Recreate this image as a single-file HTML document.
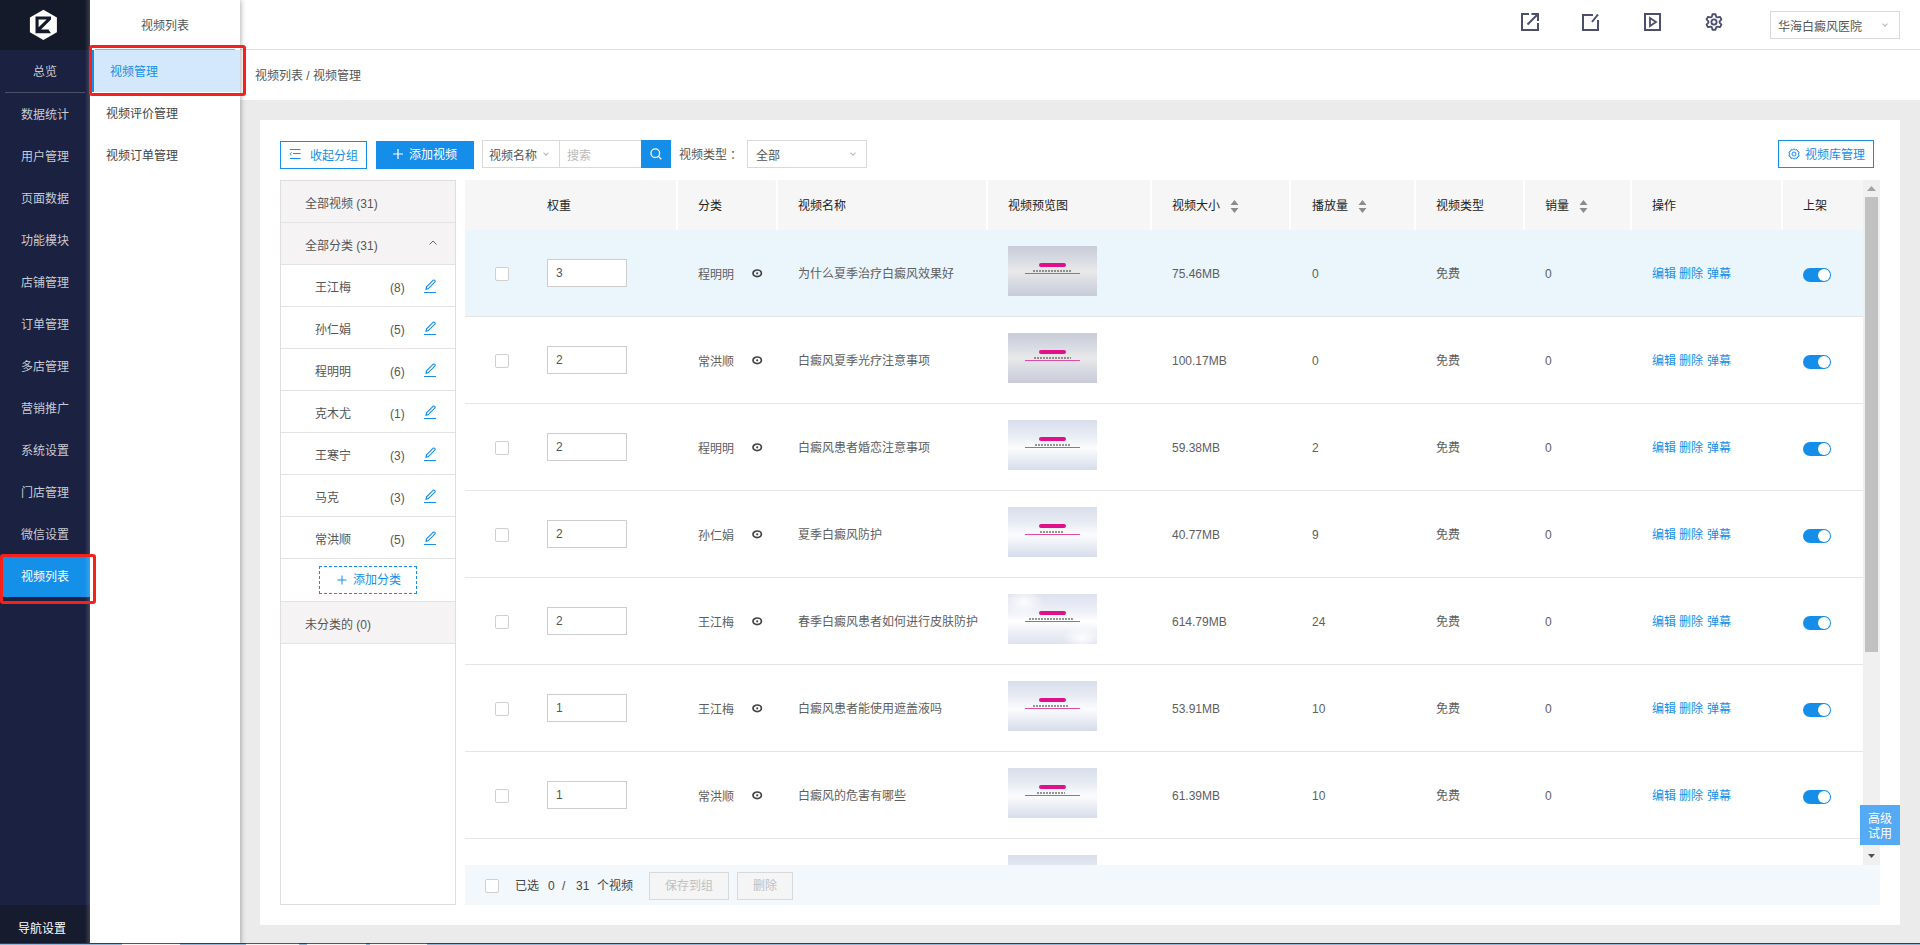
<!DOCTYPE html>
<html lang="zh-CN">
<head>
<meta charset="utf-8">
<style>
*{margin:0;padding:0;box-sizing:border-box}
html,body{width:1920px;height:945px;overflow:hidden;background:#ebebeb;font-family:"Liberation Sans",sans-serif;font-size:12px;color:#333}
.abs{position:absolute}
#nav{position:absolute;left:0;top:0;width:90px;height:945px;background:#1b2140;z-index:3}
#logo{position:absolute;left:0;top:0;width:90px;height:50px;background:#151a2b}
.ni{position:absolute;left:0;width:90px;text-align:center;color:#c9cbd3;font-size:12px;line-height:18px}
#navbot{position:absolute;left:0;top:905px;width:90px;height:40px;background:#161b2d}
#sub{position:absolute;left:90px;top:0;width:150px;height:945px;background:#fff;box-shadow:1px 0 5px rgba(0,0,0,.3);z-index:2}
.si{position:absolute;left:16px;color:#444;line-height:18px}
#hdr{position:absolute;left:240px;top:0;width:1680px;height:50px;background:#fff;border-bottom:1px solid #dcdcdc}
#bc{position:absolute;left:240px;top:50px;width:1680px;height:50px;background:#fff}
#card{position:absolute;left:260px;top:120px;width:1640px;height:805px;background:#fff}
.btn{position:absolute;height:28px;line-height:26px;font-size:12px}
.dis{border:1px solid #d9d9d9;background:#f5f5f5;color:#c0c0c0;text-align:center}
.red{position:absolute;border:3px solid #f5211c;border-radius:3px;z-index:5}
.sel{position:absolute;border:1px solid #d9d9d9;background:#fff}
.sel span{position:absolute;top:6px;line-height:18px;color:#555}
.chev{position:absolute;width:4px;height:4px;border-right:1px solid #b5b5b5;border-bottom:1px solid #b5b5b5;transform:rotate(45deg)}
#grp{position:absolute;left:280px;top:180px;width:176px;height:725px;border:1px solid #dedede;background:#fff}
.gr{position:absolute;left:0;width:174px;height:42px;border-bottom:1px solid #e3e3e3}
.gt{position:absolute;top:14px;line-height:18px;color:#555}
.ht{position:absolute;top:197px;line-height:18px;color:#222}
.sep{position:absolute;top:180px;width:2px;height:50px;background:#fff}
.row{position:absolute;width:1398px;height:87px;border-bottom:1px solid #e6e6e6}
.cell{position:absolute;line-height:18px;color:#5e5e5e}
.cb{position:absolute;width:14px;height:14px;border:1px solid #cfcfcf;border-radius:2px;background:#fff}
.inp{position:absolute;width:80px;height:28px;border:1px solid #cdcdcd;background:#fff;padding-left:8px;line-height:26px;color:#555}
.thumb{position:absolute;width:89px;height:50px}
.ta{background:linear-gradient(#c8ccd9 0%,#d8dbe2 28%,#e9e9e9 50%,#d8dbe2 72%,#c8ccd9 100%)}
.tb{background:linear-gradient(#d8deeb 0%,#e7ebf3 30%,#fbfcfd 56%,#e7ebf3 80%,#d6dcea 100%)}
.tc{background:radial-gradient(ellipse 20px 14px at 16px 8px,rgba(255,255,255,.9),rgba(255,255,255,0)),radial-gradient(ellipse 20px 12px at 74px 44px,rgba(255,255,255,.9),rgba(255,255,255,0)),linear-gradient(#dde2f0 0%,#eef0f7 35%,#ffffff 55%,#eef0f7 75%,#dfe3f1 100%)}
.thumb .tb1{position:absolute;left:31px;top:17px;width:27px;height:4px;border-radius:2px;background:#e0108a}
.thumb .tb2{position:absolute;left:25px;top:24px;width:38px;height:2px;background:repeating-linear-gradient(to right,#3d4a35 0,#3d4a35 2px,transparent 2px,transparent 3px);opacity:.55}
.thumb .tb3{position:absolute;left:17px;top:27px;width:55px;height:1.3px;background:#e04aa5}
.tg{position:absolute;width:28px;height:14px;border-radius:7px;background:#158ee9}
.tg:after{content:"";position:absolute;right:1px;top:1px;width:12px;height:12px;border-radius:6px;background:#fff}
.ops{position:absolute;color:#158ee9;line-height:18px}

</style>
</head>
<body>
<div id="nav"><div id="logo"><svg width="90" height="50" style="position:absolute;left:0;top:0"><polygon points="43.4,9.8 56.9,17.6 56.9,32.3 43.4,40 29.9,32.3 29.9,17.6" fill="#fff"/><path d="M35.5 16.6 H51 V19.6 L41 29.6 H48.4 L51 33.3 H35.5 Z M38.6 19.4 V27.3 L46.6 19.4 Z" fill="#151a2b" fill-rule="evenodd"/></svg></div>
<div class="ni" style="top:63px">总览</div>
<div class="abs" style="left:5px;top:92px;width:80px;height:1px;background:#4a4f6a"></div>
<div class="ni" style="top:106px">数据统计</div>
<div class="ni" style="top:148px">用户管理</div>
<div class="ni" style="top:190px">页面数据</div>
<div class="ni" style="top:232px">功能模块</div>
<div class="ni" style="top:274px">店铺管理</div>
<div class="ni" style="top:316px">订单管理</div>
<div class="ni" style="top:358px">多店管理</div>
<div class="ni" style="top:400px">营销推广</div>
<div class="ni" style="top:442px">系统设置</div>
<div class="ni" style="top:484px">门店管理</div>
<div class="ni" style="top:526px">微信设置</div>
<div class="abs" style="left:0;top:557px;width:90px;height:40px;background:#1590e9"></div>
<div class="ni" style="top:568px;color:#fff">视频列表</div>
<div id="navbot"></div><div class="ni" style="top:920px;left:-3px;color:#fff">导航设置</div>
<div class="abs" style="left:85px;top:0;width:5px;height:945px;background:linear-gradient(to right,rgba(255,255,255,0),rgba(255,255,255,.16))"></div></div>
<div id="sub"><div class="abs" style="left:0;top:17px;width:150px;text-align:center;color:#555;line-height:18px">视频列表</div><div class="abs" style="left:2px;top:50px;width:148px;height:42px;background:#d4e8fb;border-left:2px solid #158ee9"></div><div class="abs" style="left:5px;top:49px;width:140px;height:1px;background:#a3a9c6"></div><div class="si" style="left:20px;top:63px;color:#158ee9">视频管理</div><div class="si" style="top:105px">视频评价管理</div><div class="si" style="top:147px">视频订单管理</div></div>
<div id="hdr">
<svg class="abs" style="left:1281px;top:13px" width="18" height="18" viewBox="0 0 18 18" fill="none" stroke="#4b4f6d" stroke-width="2"><path d="M8 1 H1 V17 H17 V10"/><path d="M10.5 1 H17 V8"/><path d="M6.5 11.5 L16 2"/></svg>
<svg class="abs" style="left:1342px;top:14px" width="18" height="18" viewBox="0 0 18 18" fill="none" stroke="#4b4f6d" stroke-width="2"><path d="M11 1 H1 V16 H16 V6"/><path d="M10 8 L16 0.5"/></svg>
<svg class="abs" style="left:1404px;top:13px" width="18" height="18" viewBox="0 0 18 18" fill="none" stroke="#4b4f6d" stroke-width="2"><rect x="1" y="1" width="15" height="16"/><path d="M6 5 L12 9 L6 13 Z" stroke-width="1.8"/></svg>
<svg class="abs" style="left:1464.5px;top:12.8px" width="18" height="18" viewBox="0 0 18 18" fill="none" stroke="#4b4f6d" stroke-width="1.8"><path d="M11.28 3.88 L10.51 1.25 L7.49 1.25 L6.72 3.88 L5.71 4.47 L3.04 3.82 L1.53 6.43 L3.43 8.41 L3.43 9.59 L1.53 11.57 L3.04 14.18 L5.71 13.53 L6.72 14.12 L7.49 16.75 L10.51 16.75 L11.28 14.12 L12.29 13.53 L14.96 14.18 L16.47 11.57 L14.57 9.59 L14.57 8.41 L16.47 6.43 L14.96 3.82 L12.29 4.47 Z" stroke-linejoin="round"/><circle cx="9" cy="9" r="2.6"/></svg>
<div class="sel" style="left:1530px;top:11px;width:130px;height:28px"><span style="left:7px">华海白癜风医院</span><i class="chev" style="left:112px;top:10px"></i></div>
</div>
<div id="bc"><div class="abs" style="left:15px;top:17px;color:#555;line-height:18px">视频列表 / 视频管理</div></div>
<div id="card"></div>
<div class="btn" style="left:280px;top:141px;width:87px;border:1px solid #158ee9;color:#158ee9;background:#fff"><svg class="abs" style="left:8px;top:6px" width="12" height="12" viewBox="0 0 12 12" fill="none" stroke="#158ee9" stroke-width="1"><path d="M1 1.5H11.5M4 5.5H11.5M1 10.5H11.5M2.6 4.3L1.2 5.8L2.6 7.3"/></svg><span style="position:absolute;left:29px;top:1px">收起分组</span></div>
<div class="btn" style="left:376px;top:141px;width:98px;background:#158ee9;color:#fff"><svg class="abs" style="left:17px;top:8px" width="10" height="10" viewBox="0 0 10 10" stroke="#fff" stroke-width="1.2"><path d="M5 0V10M0 5H10"/></svg><span style="position:absolute;left:33px;top:1px">添加视频</span></div>
<div class="sel" style="left:482px;top:140px;width:78px;height:28px"><span style="left:6px">视频名称</span><i class="chev" style="left:61px;top:10px"></i></div>
<div class="sel" style="left:559px;top:140px;width:83px;height:28px"><span style="left:7px;color:#bbb">搜索</span></div>
<div class="abs" style="left:641px;top:140px;width:30px;height:28px;background:#158ee9"><svg class="abs" style="left:8px;top:7px" width="14" height="14" viewBox="0 0 14 14" fill="none" stroke="#fff" stroke-width="1.3"><circle cx="6.3" cy="6.2" r="4.3"/><path d="M9.3 9.3 L12.3 12.3"/></svg></div>
<div class="abs" style="left:679px;top:146px;color:#555;line-height:18px">视频类型 ：</div>
<div class="sel" style="left:747px;top:140px;width:120px;height:28px"><span style="left:8px">全部</span><i class="chev" style="left:103px;top:10px"></i></div>
<div class="btn" style="left:1778px;top:140px;width:96px;border:1px solid #158ee9;color:#158ee9;background:#fff"><svg class="abs" style="left:9px;top:7px" width="12" height="12" viewBox="0 0 12 12" fill="none" stroke="#158ee9" stroke-width="1"><path d="M6 0.8 L7.3 1.9 L9 1.6 L9.5 3.3 L11.1 4 L10.5 6 L11.1 8 L9.5 8.7 L9 10.4 L7.3 10.1 L6 11.2 L4.7 10.1 L3 10.4 L2.5 8.7 L0.9 8 L1.5 6 L0.9 4 L2.5 3.3 L3 1.6 L4.7 1.9 Z"/><circle cx="6" cy="6" r="2"/></svg><span style="position:absolute;left:26px;top:1px">视频库管理</span></div>
<div id="grp">
<div class="gr" style="top:0;background:#f5f3f4"><span class="gt" style="left:24px">全部视频 (31)</span></div>
<div class="gr" style="top:42px;background:#f5f3f4"><span class="gt" style="left:24px">全部分类 (31)</span><svg class="abs" style="left:148px;top:17px" width="8" height="5" viewBox="0 0 8 5" fill="none" stroke="#666" stroke-width="1"><path d="M0.5 4.5 L4 1 L7.5 4.5"/></svg></div>
<div class="gr" style="top:84px"><span class="gt" style="left:34px">王江梅</span><span class="gt" style="left:109px">(8)</span><svg class="abs" style="left:142px;top:14px" width="14" height="14" viewBox="0 0 14 14" fill="none" stroke="#158ee9" stroke-width="1.1"><path d="M3 10.5 L3.5 7.8 L10 1.3 Q11 0.6 11.8 1.4 Q12.6 2.3 11.8 3.1 L5.3 9.6 Z"/><path d="M1 13.5 H13" stroke-width="1"/></svg></div>
<div class="gr" style="top:126px"><span class="gt" style="left:34px">孙仁娟</span><span class="gt" style="left:109px">(5)</span><svg class="abs" style="left:142px;top:14px" width="14" height="14" viewBox="0 0 14 14" fill="none" stroke="#158ee9" stroke-width="1.1"><path d="M3 10.5 L3.5 7.8 L10 1.3 Q11 0.6 11.8 1.4 Q12.6 2.3 11.8 3.1 L5.3 9.6 Z"/><path d="M1 13.5 H13" stroke-width="1"/></svg></div>
<div class="gr" style="top:168px"><span class="gt" style="left:34px">程明明</span><span class="gt" style="left:109px">(6)</span><svg class="abs" style="left:142px;top:14px" width="14" height="14" viewBox="0 0 14 14" fill="none" stroke="#158ee9" stroke-width="1.1"><path d="M3 10.5 L3.5 7.8 L10 1.3 Q11 0.6 11.8 1.4 Q12.6 2.3 11.8 3.1 L5.3 9.6 Z"/><path d="M1 13.5 H13" stroke-width="1"/></svg></div>
<div class="gr" style="top:210px"><span class="gt" style="left:34px">克木尤</span><span class="gt" style="left:109px">(1)</span><svg class="abs" style="left:142px;top:14px" width="14" height="14" viewBox="0 0 14 14" fill="none" stroke="#158ee9" stroke-width="1.1"><path d="M3 10.5 L3.5 7.8 L10 1.3 Q11 0.6 11.8 1.4 Q12.6 2.3 11.8 3.1 L5.3 9.6 Z"/><path d="M1 13.5 H13" stroke-width="1"/></svg></div>
<div class="gr" style="top:252px"><span class="gt" style="left:34px">王寒宁</span><span class="gt" style="left:109px">(3)</span><svg class="abs" style="left:142px;top:14px" width="14" height="14" viewBox="0 0 14 14" fill="none" stroke="#158ee9" stroke-width="1.1"><path d="M3 10.5 L3.5 7.8 L10 1.3 Q11 0.6 11.8 1.4 Q12.6 2.3 11.8 3.1 L5.3 9.6 Z"/><path d="M1 13.5 H13" stroke-width="1"/></svg></div>
<div class="gr" style="top:294px"><span class="gt" style="left:34px">马克</span><span class="gt" style="left:109px">(3)</span><svg class="abs" style="left:142px;top:14px" width="14" height="14" viewBox="0 0 14 14" fill="none" stroke="#158ee9" stroke-width="1.1"><path d="M3 10.5 L3.5 7.8 L10 1.3 Q11 0.6 11.8 1.4 Q12.6 2.3 11.8 3.1 L5.3 9.6 Z"/><path d="M1 13.5 H13" stroke-width="1"/></svg></div>
<div class="gr" style="top:336px"><span class="gt" style="left:34px">常洪顺</span><span class="gt" style="left:109px">(5)</span><svg class="abs" style="left:142px;top:14px" width="14" height="14" viewBox="0 0 14 14" fill="none" stroke="#158ee9" stroke-width="1.1"><path d="M3 10.5 L3.5 7.8 L10 1.3 Q11 0.6 11.8 1.4 Q12.6 2.3 11.8 3.1 L5.3 9.6 Z"/><path d="M1 13.5 H13" stroke-width="1"/></svg></div>
<div class="gr" style="top:378px;height:43px"><div class="abs" style="left:38px;top:7px;width:98px;height:28px;border:1px dashed #158ee9;color:#158ee9;line-height:26px"><svg class="abs" style="left:17px;top:8px" width="10" height="10" viewBox="0 0 10 10" stroke="#158ee9" stroke-width="1"><path d="M5 0.5V9.5M0.5 5H9.5"/></svg><span style="position:absolute;left:33px;top:0">添加分类</span></div></div>
<div class="gr" style="top:421px;background:#f5f3f4"><span class="gt" style="left:24px">未分类的 (0)</span></div>
</div>
<div class="abs" style="left:465px;top:180px;width:1398px;height:50px;background:#f6f6f6"></div>
<div class="sep" style="left:676px"></div>
<div class="sep" style="left:776px"></div>
<div class="sep" style="left:986px"></div>
<div class="sep" style="left:1150px"></div>
<div class="sep" style="left:1289px"></div>
<div class="sep" style="left:1414px"></div>
<div class="sep" style="left:1523px"></div>
<div class="sep" style="left:1630px"></div>
<div class="sep" style="left:1781px"></div>
<div class="ht" style="left:547px">权重</div>
<div class="ht" style="left:698px">分类</div>
<div class="ht" style="left:798px">视频名称</div>
<div class="ht" style="left:1008px">视频预览图</div>
<div class="ht" style="left:1172px">视频大小</div>
<div class="ht" style="left:1312px">播放量</div>
<div class="ht" style="left:1436px">视频类型</div>
<div class="ht" style="left:1545px">销量</div>
<div class="ht" style="left:1652px">操作</div>
<div class="ht" style="left:1803px">上架</div>
<svg class="abs" style="left:1229.5px;top:199px" width="9" height="15" viewBox="0 0 9 15" fill="#8c8c8c"><path d="M0.5 6 L4.5 1 L8.5 6 Z M0.5 9 L4.5 14 L8.5 9 Z"/></svg>
<svg class="abs" style="left:1357.5px;top:199px" width="9" height="15" viewBox="0 0 9 15" fill="#8c8c8c"><path d="M0.5 6 L4.5 1 L8.5 6 Z M0.5 9 L4.5 14 L8.5 9 Z"/></svg>
<svg class="abs" style="left:1578.5px;top:199px" width="9" height="15" viewBox="0 0 9 15" fill="#8c8c8c"><path d="M0.5 6 L4.5 1 L8.5 6 Z M0.5 9 L4.5 14 L8.5 9 Z"/></svg>
<div id="tbody" class="abs" style="left:465px;top:230px;width:1398px;height:635px;overflow:hidden">
<div class="row" style="left:0;top:0px;background:#eaf5fc">
<div class="cb" style="left:30px;top:37px"></div>
<div class="inp" style="left:82px;top:29px">3</div>
<div class="cell" style="left:233px;top:36px">程明明</div>
<svg class="abs" style="left:287px;top:39px" width="11" height="9" viewBox="0 0 11 9"><ellipse cx="5.2" cy="4.3" rx="4.2" ry="3.3" fill="none" stroke="#444" stroke-width="1.7"/><circle cx="5.2" cy="4.3" r="1.1" fill="#444"/></svg>
<div class="cell" style="left:333px;top:35px">为什么夏季治疗白癜风效果好</div>
<div class="thumb ta" style="left:543px;top:16px"><i class="tb1"></i><i class="tb2" style="left:25px;width:38px"></i><i class="tb3"></i></div>
<div class="cell" style="left:707px;top:35px">75.46MB</div>
<div class="cell" style="left:847px;top:35px">0</div>
<div class="cell" style="left:971px;top:35px">免费</div>
<div class="cell" style="left:1080px;top:35px">0</div>
<div class="ops" style="left:1187px;top:35px">编辑 删除 弹幕</div>
<div class="tg" style="left:1338px;top:38px"></div>
</div>
<div class="row" style="left:0;top:87px;background:#fff">
<div class="cb" style="left:30px;top:37px"></div>
<div class="inp" style="left:82px;top:29px">2</div>
<div class="cell" style="left:233px;top:36px">常洪顺</div>
<svg class="abs" style="left:287px;top:39px" width="11" height="9" viewBox="0 0 11 9"><ellipse cx="5.2" cy="4.3" rx="4.2" ry="3.3" fill="none" stroke="#444" stroke-width="1.7"/><circle cx="5.2" cy="4.3" r="1.1" fill="#444"/></svg>
<div class="cell" style="left:333px;top:35px">白癜风夏季光疗注意事项</div>
<div class="thumb ta" style="left:543px;top:16px"><i class="tb1"></i><i class="tb2" style="left:26px;width:37px"></i><i class="tb3"></i></div>
<div class="cell" style="left:707px;top:35px">100.17MB</div>
<div class="cell" style="left:847px;top:35px">0</div>
<div class="cell" style="left:971px;top:35px">免费</div>
<div class="cell" style="left:1080px;top:35px">0</div>
<div class="ops" style="left:1187px;top:35px">编辑 删除 弹幕</div>
<div class="tg" style="left:1338px;top:38px"></div>
</div>
<div class="row" style="left:0;top:174px;background:#fff">
<div class="cb" style="left:30px;top:37px"></div>
<div class="inp" style="left:82px;top:29px">2</div>
<div class="cell" style="left:233px;top:36px">程明明</div>
<svg class="abs" style="left:287px;top:39px" width="11" height="9" viewBox="0 0 11 9"><ellipse cx="5.2" cy="4.3" rx="4.2" ry="3.3" fill="none" stroke="#444" stroke-width="1.7"/><circle cx="5.2" cy="4.3" r="1.1" fill="#444"/></svg>
<div class="cell" style="left:333px;top:35px">白癜风患者婚恋注意事项</div>
<div class="thumb tb" style="left:543px;top:16px"><i class="tb1"></i><i class="tb2" style="left:27px;width:35px"></i><i class="tb3"></i></div>
<div class="cell" style="left:707px;top:35px">59.38MB</div>
<div class="cell" style="left:847px;top:35px">2</div>
<div class="cell" style="left:971px;top:35px">免费</div>
<div class="cell" style="left:1080px;top:35px">0</div>
<div class="ops" style="left:1187px;top:35px">编辑 删除 弹幕</div>
<div class="tg" style="left:1338px;top:38px"></div>
</div>
<div class="row" style="left:0;top:261px;background:#fff">
<div class="cb" style="left:30px;top:37px"></div>
<div class="inp" style="left:82px;top:29px">2</div>
<div class="cell" style="left:233px;top:36px">孙仁娟</div>
<svg class="abs" style="left:287px;top:39px" width="11" height="9" viewBox="0 0 11 9"><ellipse cx="5.2" cy="4.3" rx="4.2" ry="3.3" fill="none" stroke="#444" stroke-width="1.7"/><circle cx="5.2" cy="4.3" r="1.1" fill="#444"/></svg>
<div class="cell" style="left:333px;top:35px">夏季白癜风防护</div>
<div class="thumb tb" style="left:543px;top:16px"><i class="tb1"></i><i class="tb2" style="left:32px;width:24px"></i><i class="tb3"></i></div>
<div class="cell" style="left:707px;top:35px">40.77MB</div>
<div class="cell" style="left:847px;top:35px">9</div>
<div class="cell" style="left:971px;top:35px">免费</div>
<div class="cell" style="left:1080px;top:35px">0</div>
<div class="ops" style="left:1187px;top:35px">编辑 删除 弹幕</div>
<div class="tg" style="left:1338px;top:38px"></div>
</div>
<div class="row" style="left:0;top:348px;background:#fff">
<div class="cb" style="left:30px;top:37px"></div>
<div class="inp" style="left:82px;top:29px">2</div>
<div class="cell" style="left:233px;top:36px">王江梅</div>
<svg class="abs" style="left:287px;top:39px" width="11" height="9" viewBox="0 0 11 9"><ellipse cx="5.2" cy="4.3" rx="4.2" ry="3.3" fill="none" stroke="#444" stroke-width="1.7"/><circle cx="5.2" cy="4.3" r="1.1" fill="#444"/></svg>
<div class="cell" style="left:333px;top:35px">春季白癜风患者如何进行皮肤防护</div>
<div class="thumb tc" style="left:543px;top:16px"><i class="tb1"></i><i class="tb2" style="left:21px;width:45px"></i><i class="tb3"></i></div>
<div class="cell" style="left:707px;top:35px">614.79MB</div>
<div class="cell" style="left:847px;top:35px">24</div>
<div class="cell" style="left:971px;top:35px">免费</div>
<div class="cell" style="left:1080px;top:35px">0</div>
<div class="ops" style="left:1187px;top:35px">编辑 删除 弹幕</div>
<div class="tg" style="left:1338px;top:38px"></div>
</div>
<div class="row" style="left:0;top:435px;background:#fff">
<div class="cb" style="left:30px;top:37px"></div>
<div class="inp" style="left:82px;top:29px">1</div>
<div class="cell" style="left:233px;top:36px">王江梅</div>
<svg class="abs" style="left:287px;top:39px" width="11" height="9" viewBox="0 0 11 9"><ellipse cx="5.2" cy="4.3" rx="4.2" ry="3.3" fill="none" stroke="#444" stroke-width="1.7"/><circle cx="5.2" cy="4.3" r="1.1" fill="#444"/></svg>
<div class="cell" style="left:333px;top:35px">白癜风患者能使用遮盖液吗</div>
<div class="thumb tb" style="left:543px;top:16px"><i class="tb1"></i><i class="tb2" style="left:25px;width:36px"></i><i class="tb3"></i></div>
<div class="cell" style="left:707px;top:35px">53.91MB</div>
<div class="cell" style="left:847px;top:35px">10</div>
<div class="cell" style="left:971px;top:35px">免费</div>
<div class="cell" style="left:1080px;top:35px">0</div>
<div class="ops" style="left:1187px;top:35px">编辑 删除 弹幕</div>
<div class="tg" style="left:1338px;top:38px"></div>
</div>
<div class="row" style="left:0;top:522px;background:#fff">
<div class="cb" style="left:30px;top:37px"></div>
<div class="inp" style="left:82px;top:29px">1</div>
<div class="cell" style="left:233px;top:36px">常洪顺</div>
<svg class="abs" style="left:287px;top:39px" width="11" height="9" viewBox="0 0 11 9"><ellipse cx="5.2" cy="4.3" rx="4.2" ry="3.3" fill="none" stroke="#444" stroke-width="1.7"/><circle cx="5.2" cy="4.3" r="1.1" fill="#444"/></svg>
<div class="cell" style="left:333px;top:35px">白癜风的危害有哪些</div>
<div class="thumb tb" style="left:543px;top:16px"><i class="tb1"></i><i class="tb2" style="left:29px;width:28px"></i><i class="tb3"></i></div>
<div class="cell" style="left:707px;top:35px">61.39MB</div>
<div class="cell" style="left:847px;top:35px">10</div>
<div class="cell" style="left:971px;top:35px">免费</div>
<div class="cell" style="left:1080px;top:35px">0</div>
<div class="ops" style="left:1187px;top:35px">编辑 删除 弹幕</div>
<div class="tg" style="left:1338px;top:38px"></div>
</div>
<div class="row" style="left:0;top:609px;background:#fff"><div class="thumb tb" style="left:543px;top:16px"></div></div>
</div>
<div class="abs" style="left:1863px;top:180px;width:17px;height:685px;background:#f0f0f0"></div>
<div class="abs" style="left:1865px;top:197px;width:13px;height:455px;background:#c1c1c1"></div>
<svg class="abs" style="left:1867px;top:186px" width="9" height="5" viewBox="0 0 9 5"><path d="M0 5 L4.5 0 L9 5Z" fill="#a3a3a3"/></svg>
<svg class="abs" style="left:1868px;top:854px" width="7" height="4" viewBox="0 0 7 4"><path d="M0 0 L3.5 4 L7 0Z" fill="#505050"/></svg>
<div class="abs" style="left:465px;top:865px;width:1415px;height:40px;background:#f3f8fd"></div>
<div class="cb" style="left:485px;top:879px;width:14px;height:14px"></div>
<div class="abs" style="left:515px;top:877px;color:#444;line-height:18px">已选</div>
<div class="abs" style="left:548px;top:877px;color:#444;line-height:18px">0</div>
<div class="abs" style="left:562px;top:877px;color:#444;line-height:18px">/</div>
<div class="abs" style="left:576px;top:877px;color:#444;line-height:18px">31</div>
<div class="abs" style="left:597px;top:877px;color:#444;line-height:18px">个视频</div>
<div class="btn dis" style="left:649px;top:872px;width:80px">保存到组</div>
<div class="btn dis" style="left:737px;top:872px;width:56px">删除</div>
<div class="abs" style="left:1860px;top:805px;width:40px;height:40px;background:#55aaf5;color:#fff;text-align:center;line-height:14.5px;padding-top:7px">高级<br>试用</div>
<div class="red" style="left:89px;top:45px;width:157px;height:51px"></div>
<div class="red" style="left:0;top:554px;width:96px;height:50px"></div>
<div class="abs" style="left:0;top:943px;width:1920px;height:1px;background:#2a3f58;z-index:9"></div>
<div class="abs" style="left:0;top:944px;width:1920px;height:1px;background:#8fb8dc;z-index:9"></div>
<div class="abs" style="left:122px;top:943px;width:58px;height:2px;background:#f4f4f4;border-top:1px solid #555;z-index:9"></div>
<div class="abs" style="left:246px;top:943px;width:53px;height:2px;background:#f4f4f4;border-top:1px solid #555;z-index:9"></div>
<div class="abs" style="left:307px;top:943px;width:59px;height:2px;background:#f4f4f4;border-top:1px solid #555;z-index:9"></div>
<div class="abs" style="left:370px;top:943px;width:57px;height:2px;background:#f4f4f4;border-top:1px solid #555;z-index:9"></div>
</body>
</html>
